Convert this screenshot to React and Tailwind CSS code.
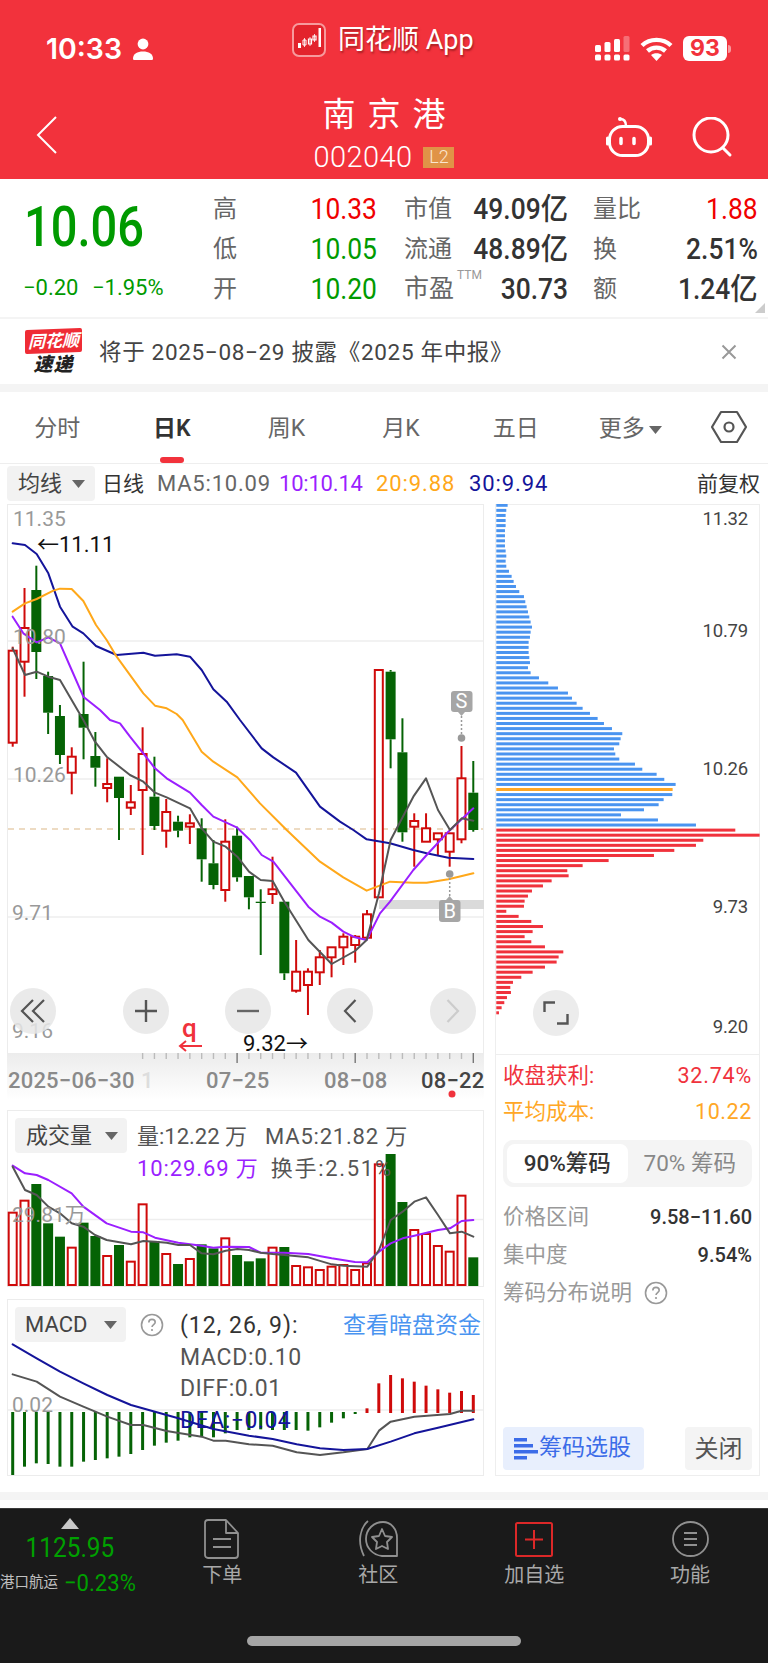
import React from "react";

const RED = "#cf0a0a";
const GREEN = "#056305";

// [top wick, body top, body bottom, bottom wick, isUp]
const candles = [
  [646.7, 650.7, 742.7, 746.7, 1],[588, 628, 661.7, 696.7, 1],[565.7, 590, 652, 679, 0],[671.7, 676, 712.7, 734, 0],
  [705, 716, 755, 764, 0],[747.3, 756.7, 772.7, 794.3, 1],[661.7, 714, 727.7, 759.3, 0],[732, 756, 767.7, 786.7, 0],
  [758.3, 784, 788, 802.3, 1],[776.7, 776.7, 798, 840, 0],[785, 802.3, 807.7, 815, 1],[727.3, 754, 790, 855, 1],
  [756.7, 796.7, 826, 830, 0],[799, 812, 830.7, 847.7, 1],[815.7, 821.7, 830.7, 837.3, 0],[814.3, 823.3, 826.7, 844, 1],
  [818.3, 828.3, 859.3, 881.7, 0],[840, 863.3, 885, 889.3, 0],[819.3, 841.7, 890, 901.7, 1],[826.7, 835.7, 877.3, 881.7, 0],
  [876, 876, 897.3, 909.3, 0],[889.3, 901.7, 903, 955, 0],[856.7, 889.3, 894, 904, 1],[901.7, 901.7, 973.3, 980, 0],
  [940, 971.7, 990.7, 992.7, 1],[968.3, 971.7, 985, 1015, 1],[950, 957.3, 972.3, 985, 1],[947.3, 947.3, 957.3, 977.3, 1],
  [933.3, 936.7, 947.3, 965, 1],[935, 936.7, 945, 962.7, 1],[910, 914.3, 937.7, 937.7, 1],[670, 670, 897.3, 897.3, 1],
  [670, 671.7, 739.3, 768.3, 0],[718.3, 752.3, 832.3, 841.7, 0],[813.3, 821, 826.7, 866.7, 1],[813.3, 828.3, 841.7, 841.7, 1],
  [833.3, 833.3, 839.3, 855, 1],[833.3, 833.3, 851.7, 866.7, 1],[746, 778.3, 839.3, 843.3, 1],[761, 792.7, 830, 831.7, 0],
];
const cx = (i) => 12.7 + 11.81 * i;

const z2 = (p) => p.map(([x, y]) => `${x / 3},${400 + y / 3}`).join(" ");
const z3 = (p) => p.map(([x, y]) => `${x / 3},${720 + y / 3}`).join(" ");
const z4 = (p) => p.map(([x, y]) => `${x / 3},${1100 + y / 3}`).join(" ");

const navy = z2([[38,430],[75,435],[110,462],[145,520],[180,620],[218,680],[250,700],[288,738],[350,765],[430,758],[465,767],[530,763],[570,770],[605,810],[640,868],[680,905],[720,960]]) + " " +
  z3([[785,85],[820,112],[888,158],[960,260],[1020,305],[1060,330],[1100,358],[1170,370],[1240,390],[1280,400],[1345,413],[1420,417]]);
const orange = z2([[38,635],[75,610],[110,597],[160,572],[180,566],[215,567],[250,603],[288,675],[320,720],[350,770],[430,880],[465,917],[500,925],[530,942],[548,960]]) + " " +
  z3([[605,95],[640,125],[712,172],[780,250],[860,330],[960,425],[1030,472],[1100,512],[1170,485],[1240,488],[1280,488],[1345,478],[1420,460]]);
const purple = z2([[38,650],[70,700],[110,727],[145,712],[180,730],[215,810],[250,890],[300,930],[330,960]]) + " " +
  z3([[360,10],[390,50],[430,100],[465,145],[500,175],[570,218],[605,255],[640,290],[710,322],[750,360],[785,405],[820,425],[855,470],[925,560],[960,590],[995,608],[1030,635],[1065,652],[1100,660],[1140,580],[1170,545],[1240,450],[1280,405],[1345,335],[1420,265]]);
const gray = z2([[38,745],[75,825],[110,815],[145,830],[180,840],[250,960]]) + " " +
  z3([[285,65],[320,110],[390,165],[430,185],[465,218],[500,232],[570,265],[605,325],[640,365],[677,380],[712,410],[747,455],[782,480],[818,483],[853,545],[925,660],[995,732],[1065,693],[1100,660],[1137,520],[1172,360],[1240,230],[1278,175],[1314,270],[1350,330],[1385,295],[1420,302]]);

const vols = [338,302,252,370,410,443,368,408,468,435,485,313,423,462,492,477,433,445,415,465,484,475,443,441,498,502,510,500,495,510,490,193,162,306,390,402,438,455,287,472];
const volGray = z4([[38,200],[75,270],[110,285],[145,320],[180,340],[215,370],[250,380],[285,405],[320,420],[393,433],[430,423],[465,425],[500,428],[535,435],[570,435],[605,460],[640,463],[677,452],[712,447],[747,450],[782,458],[818,462],[853,465],[925,472],[995,493],[1031,497],[1102,500],[1137,450],[1172,360],[1208,335],[1243,305],[1278,292],[1314,345],[1350,400],[1385,395],[1420,410]]);
const volPurple = z4([[38,197],[75,220],[110,225],[145,240],[215,280],[250,320],[320,370],[393,395],[430,397],[465,413],[535,428],[605,437],[640,443],[677,440],[747,441],[782,458],[853,458],[925,462],[995,475],[1065,486],[1102,487],[1137,455],[1172,430],[1208,415],[1243,407],[1314,390],[1350,385],[1385,363],[1420,360]]);

const macdBars = [1125,1100,1090,1092,1100,1100,1085,1080,1075,1070,1062,1050,1037,1028,1022,1012,1010,1012,1000,990,990,988,990,990,990,992,982,968,955,942,925,850,825,835,845,857,868,878,873,885];
const macdNavy = z4([[38,733],[110,775],[180,815],[250,850],[322,885],[393,915],[465,935],[535,955],[640,987],[747,1007],[818,1017],[890,1033],[960,1045],[1030,1050],[1102,1047],[1172,1025],[1243,1000],[1314,983],[1420,958]]);
const macdGray = z4([[38,823],[110,845],[180,890],[250,920],[322,950],[393,975],[430,975],[500,993],[605,1010],[640,1022],[677,1022],[747,1033],[818,1037],[890,1057],[960,1065],[1030,1057],[1102,1047],[1137,992],[1172,965],[1243,950],[1350,942],[1385,932],[1420,932]]);

const chips = [68,64,62,62,62,60,60,60,60,62,64,62,64,72,80,86,93,103,117,121,125,129,133,137,141,137,135,131,131,131,133,135,129,137,162,190,219,249,261,275,293,315,338,357,381,412,407,403,387,391,403,450,472,515,538,572,563,562,536,521,477,408,519,633,
  751,824,655,633,568,507,371,293,247,251,200,174,141,129,119,117,64,101,139,174,143,119,139,180,235,221,215,180,143,109,84,76,78,66,58,50,42];

const ChartLine = ({ points, color, w = 2 }) => (
  <polyline points={points} fill="none" stroke={color} strokeWidth={w} strokeLinejoin="round" strokeLinecap="round" />
);

const Caret = () => (
  <svg width="13" height="8" viewBox="0 0 13 8" className="shrink-0"><path d="M0 0H13L6.5 8Z" fill="#666" /></svg>
);

const SelectBtn = ({ label, className }) => (
  <div className={"flex items-center justify-between rounded-[4px] bg-[#f2f2f2] text-[22px] text-[#444] " + className}>
    <span>{label}</span>
    <Caret />
  </div>
);

const Help = ({ color = "#999" }) => (
  <svg width="24" height="24" viewBox="0 0 24 24">
    <circle cx="12" cy="12" r="10.5" fill="none" stroke={color} strokeWidth="1.6" />
    <path d="M8.8 9.4c0-1.9 1.4-3 3.2-3s3.2 1.1 3.2 2.8c0 2.4-3.2 2.4-3.2 4.9" fill="none" stroke={color} strokeWidth="1.6" />
    <circle cx="12" cy="17" r="1.1" fill={color} />
  </svg>
);

const Round = ({ left, top, children }) => <div className={"absolute flex h-[46px] w-[46px] items-center justify-center rounded-full bg-[#e6e6e6]/85 " + left + " " + top}>{children}</div>;

function StatusBar() {
  return (
    <div className="flex h-[80px] items-start">
      <div className="flex w-[292px] items-center pl-[46px] pt-[31px] text-white">
        <span className="text-[29px] font-semibold leading-9 font-['Inter',sans-serif] scale-x-[0.98] origin-left inline-block">10:33</span>
        <svg width="20" height="22" viewBox="0 0 20 22" className="ml-[9px]" fill="#fff">
          <circle cx="10" cy="6" r="5.4" />
          <path d="M0 20.5c0-4.5 4.4-7 10-7s10 2.5 10 7c0 1-.6 1.5-1.5 1.5h-17C.6 22 0 21.500 0 20.500Z" />
        </svg>
      </div>
      <div className="flex w-[303px] items-start pt-[23px]">
        <svg width="34" height="34" viewBox="0 0 34 34">
          <rect x="1" y="1" width="32" height="32" rx="6" fill="#e3232c" stroke="#f79a9d" strokeWidth="2" />
          <path d="M6 20h3v5H6z" fill="#fff" />
          <path d="M11 17h3v5h-3z" fill="none" stroke="#fff" strokeWidth="1" />
          <path d="M16.500 16h3v5h-3zM21 13h3v4h-3z" fill="none" stroke="#fff" strokeWidth="1.2" />
          <path d="M26.500 5h2.500v19h-2.500z" fill="#fff" />
          <path d="M12.500 15v9M18 14v9M22.500 11v8" stroke="#fff" strokeWidth=".8" />
        </svg>
        <span className="ml-[12px] text-[27px] leading-[34px] text-white [text-shadow:1px_2px_2px_rgba(120,20,20,0.6)]">同花顺 App</span>
      </div>
      <div className="flex items-center pt-[36px]">
        <svg width="35" height="25" viewBox="0 0 35 25" fill="#fff">
          <rect x="0" y="9" width="6" height="7" rx="1.500" /><rect x="9.500" y="6" width="6" height="10" rx="1.500" /><rect x="19" y="3" width="6" height="13" rx="1.500" /><rect x="28.500" y="0" width="6" height="16" rx="1.500" opacity=".3" />
          <rect x="0" y="18.500" width="6" height="6" rx="1.500" /><rect x="9.500" y="18.500" width="6" height="6" rx="1.500" /><rect x="19" y="18.500" width="6" height="6" rx="1.500" /><rect x="28.500" y="18.500" width="6" height="6" rx="1.500" />
        </svg>
        <svg width="33" height="24" viewBox="0 0 33 24" className="ml-[10px]" fill="none" stroke="#fff" strokeWidth="4.400">
          <path d="M2 8.500C10 1 23 1 31 8.500" /><path d="M7.500 14c5-4.500 13-4.500 18 0" />
          <path d="M16.500 24l-5.500-6c3-2.500 8-2.500 11 0Z" fill="#fff" stroke="none" />
        </svg>
        <div className="ml-[10px] flex h-[25px] w-[44px] items-center justify-center rounded-[6px] bg-white text-[23px] font-bold leading-none text-[#f2323c] font-['Inter',sans-serif]">93</div>
        <div className="ml-[1px] h-[8px] w-[3px] rounded-r-full bg-white/50" />
      </div>
    </div>
  );
}

function NavBar() {
  return (
    <div className="flex h-[99px]">
      <div className="w-[300px] pl-[36px] pt-[36px]">
        <svg width="22" height="38" viewBox="0 0 22 38" fill="none" stroke="#fff" strokeWidth="2"><path d="M20 1 2 19l18 18" /></svg>
      </div>
      <div className="flex w-[168px] flex-col items-center pt-[15px] text-white">
        <div className="h-[40px] pl-[12px] text-[33px] font-normal leading-[40px] tracking-[12px]">南京港</div>
        <div className="mt-[7px] flex h-[30px] items-center">
          <span className="text-[29px] font-light leading-[30px] tracking-[0.4px]">002040</span>
          <span className="ml-[11px] flex h-[21px] w-[31px] items-center justify-center bg-[#e09347] text-[18px] font-light leading-none text-[#fbe6d0]">L2</span>
        </div>
      </div>
      <div className="flex w-[300px] items-start pl-[138px] pt-[37px]">
        <svg width="46" height="40" viewBox="0 0 46 40" fill="none" stroke="#fff" strokeWidth="3">
          <circle cx="14" cy="2" r="2" fill="#fff" stroke="none" />
          <path d="M14 2c4 0 6 3 6 7" strokeLinecap="round" strokeWidth="2.500" />
          <rect x="3.500" y="9.500" width="39" height="29" rx="13" />
          <path d="M1.500 21v6M44.500 21v6" strokeLinecap="round" />
          <path d="M15 21.500v5M28 21.500v5" strokeWidth="3.500" strokeLinecap="round" />
        </svg>
        <svg width="42" height="42" viewBox="0 0 42 42" fill="none" stroke="#fff" strokeWidth="3" className="ml-[40px]">
          <circle cx="19" cy="18" r="17" /><path d="M31 31l7 7" strokeLinecap="round" />
        </svg>
      </div>
    </div>
  );
}

const Lbl = ({ children, className = "text-[24px]" }) => <span className={"leading-10 text-[#666] " + className}>{children}</span>;
const Val = ({ children, color }) => (
  <span className={"inline-block origin-right scale-x-[0.91] whitespace-nowrap text-[29px] leading-10 " + color}>{children}</span>
);
const Yi = ({ n }) => <>{n}<span className="text-[30px]">亿</span></>;

function QuoteCol({ rows, className }) {
  return (
    <div className={"flex flex-col " + className}>
      {rows.map((r, i) => (
        <div key={i} className="flex h-10 items-center justify-between">
          {r[0]}
          <Val color={r[2]}>{r[1]}</Val>
        </div>
      ))}
    </div>
  );
}

function Quote() {
  return (
    <div className="relative flex h-[138px] pt-[10px]">
      <div className="flex w-[213px] flex-col pl-[24px] text-[#009a00]">
        <div className="h-[79px] origin-left scale-x-[0.84] text-[56px] font-medium leading-[76px]">10.06</div>
        <div className="flex h-[40px] items-center text-[22px] leading-10">
          <span className="ml-[-1px] inline-block w-[69px]">−0.20</span>
          <span className="inline-block">−1.95%</span>
        </div>
      </div>
      <QuoteCol className="w-[164px]" rows={[[<Lbl>高</Lbl>, "10.33", "text-[#f00000]"], [<Lbl>低</Lbl>, "10.05", "text-[#009a00]"], [<Lbl>开</Lbl>, "10.20", "text-[#009a00]"]]} />
      <QuoteCol className="ml-[27px] w-[164px]" rows={[
        [<Lbl>市值</Lbl>, <Yi n="49.09" />, "font-medium text-[#333]"],
        [<Lbl>流通</Lbl>, <Yi n="48.89" />, "font-medium text-[#333]"],
        [<span className="flex items-start"><Lbl className="text-[25px]">市盈</Lbl><span className="ml-[3px] mt-[-1px] text-[12px] leading-[14px] text-[#999]">TTM</span></span>, "30.73", "font-medium text-[#333]"],
      ]} />
      <QuoteCol className="ml-[25px] w-[165px]" rows={[[<Lbl>量比</Lbl>, "1.88", "text-[#f00000]"], [<Lbl>换</Lbl>, "2.51%", "font-medium text-[#333]"], [<Lbl>额</Lbl>, <Yi n="1.24" />, "font-medium text-[#333]"]]} />
      <svg width="10" height="10" viewBox="0 0 10 10" className="absolute bottom-[4px] right-[3px]"><path d="M10 0V10H0Z" fill="#ccc" /></svg>
    </div>
  );
}

function Alert() {
  return (
    <div className="flex h-[65px] items-center">
      <div className="ml-[25px] flex h-[46px] w-[57px] flex-col items-center">
        <div className="flex h-[24px] w-[57px] -skew-y-2 items-center justify-center rounded-[2px] bg-[#ef2c35] text-[17px] font-bold italic leading-none text-white">同花顺</div>
        <div className="mt-[1px] text-[19px] font-black italic leading-[21px] tracking-[1px] text-[#222]">速递</div>
      </div>
      <div className="ml-[17px] whitespace-nowrap text-[22.5px] leading-[30px] tracking-[0.67px] text-[#444]">将于 2025−08−29 披露《2025 年中报》</div>
      <svg width="16" height="16" viewBox="0 0 16 16" className="ml-auto mr-[31px]" fill="none" stroke="#999" strokeWidth="2"><path d="M1.500 1.500l13 13M14.500 1.500l-13 13" /></svg>
    </div>
  );
}

function Tabs() {
  const items = ["分时", "日K", "周K", "月K", "五日"];
  return (
    <div className="flex h-[72px] border-b border-[#eeeeee]">
      {items.map((t, i) => (
        <div key={t} className="flex w-[114.6px] flex-col items-center pt-[22px]">
          <span className={"text-[23px] leading-[30px] " + (i === 1 ? "font-semibold text-[#333]" : "text-[#666]")}>{t}</span>
          <div className={"mt-[13px] h-[6px] w-[24px] rounded-full " + (i === 1 ? "bg-[#f2323c]" : "")} />
        </div>
      ))}
      <div className="flex w-[114.6px] items-start justify-center pt-[22px]">
        <span className="text-[23px] leading-[30px] text-[#666]">更多</span>
        <svg width="13" height="8" viewBox="0 0 13 8" className="ml-[4px] mt-[12px]"><path d="M0 0H13L6.500 8Z" fill="#666" /></svg>
      </div>
      <div className="ml-[23px] pt-[17px]">
        <svg width="36" height="36" viewBox="0 0 36 36" fill="none" stroke="#555" strokeWidth="2.200" strokeLinejoin="round">
          <path d="M10 3h16l9 15-9 15H10L1 18Z" /><circle cx="18" cy="18" r="4.500" />
        </svg>
      </div>
    </div>
  );
}

function MaRow() {
  return (
    <div className="flex h-[40px] items-start pt-[2px] text-[22px] leading-[36px]">
      <SelectBtn label="均线" className="ml-[7px] h-[35px] w-[88px] pl-[11px] pr-[10px]" />
      <span className="ml-[7px] w-[55px] text-[21px] text-[#333]">日线</span>
      <span className="w-[122px] text-[#666] tracking-[0.8px]">MA5:10.09</span>
      <span className="w-[97px] text-[#9b1fff] tracking-[-0.2px]">10:10.14</span>
      <span className="w-[93px] text-[#ffa81a] tracking-[0.9px]">20:9.88</span>
      <span className="w-[228px] text-[#14149a] tracking-[0.9px]">30:9.94</span>
      <span className="text-[21px] text-[#333]">前复权</span>
    </div>
  );
}

function MainChart() {
  const T = ({ x, y, children, fill = "#999", s = 21 }) => <text x={x} y={y} fontSize={s} fill={fill}>{children}</text>;
  return (
    <div className="relative h-[549px] w-[477px] border border-[#ececec] border-b-0">
      <svg width="477" height="549" viewBox="7 504 477 549" className="absolute left-[-1px] top-[-1px] overflow-visible">
        {[641, 779, 917].map((y) => <line key={y} x1="8" x2="483" y1={y} y2={y} stroke="#eeeeee" strokeWidth="1.500" />)}
        <line x1="8" x2="483" y1="829" y2="829" stroke="#e8d0b0" strokeWidth="1.500" strokeDasharray="6 5" />
        <rect x="379" y="900" width="105" height="9" fill="#dadada" />
        {candles.map((c, i) => {
          const x = cx(i);
          const col = c[4] ? RED : GREEN;
          return (
            <g key={i}>
              <line x1={x} x2={x} y1={c[0]} y2={c[1]} stroke={col} strokeWidth="2" />
              <line x1={x} x2={x} y1={c[2]} y2={c[3]} stroke={col} strokeWidth="2" />
              {c[4]
                ? <rect x={x - 4} y={c[1]} width="8" height={c[2] - c[1]} fill="#fff" stroke={col} strokeWidth="2" />
                : <rect x={x - 5} y={c[1]} width="10" height={c[2] - c[1]} fill={col} />}
            </g>
          );
        })}
        <ChartLine points={navy} color="#14149a" />
        <ChartLine points={orange} color="#ffa81a" />
        <ChartLine points={purple} color="#9b1fff" />
        <ChartLine points={gray} color="#555555" />
        <T x="13" y="526">11.35</T>
        <T x="37" y="552" fill="#111" s={22}>←11.11</T>
        <T x="13" y="644">10.80</T>
        <T x="13" y="782">10.26</T>
        <T x="12" y="920">9.71</T>
        <T x="12" y="1038">9.16</T>
        <T x="243" y="1051" fill="#111" s={22}>9.32→</T>
        <text x="182" y="1037" fontSize="26" fontWeight="500" fill="#f0323c">q</text>
        <path d="M202 1046H180M186 1041l-6 5 6 5" fill="none" stroke="#f0323c" strokeWidth="2" />
        <rect x="451" y="691" width="21.500" height="21" rx="3" fill="#a6a6a6" />
        <path d="M458 712h7l-3.500 4Z" fill="#a6a6a6" />
        <text x="461.500" y="708" fontSize="20" fill="#fff" textAnchor="middle">S</text>
        <line x1="461.500" x2="461.500" y1="716" y2="734" stroke="#999" strokeWidth="1.500" strokeDasharray="2 2" />
        <circle cx="461.500" cy="738" r="3.800" fill="#999" />
        <circle cx="449.700" cy="874" r="3.800" fill="#999" />
        <line x1="449.700" x2="449.700" y1="878" y2="897" stroke="#999" strokeWidth="1.500" strokeDasharray="2 2" />
        <path d="M446 900h7l-3.500-4Z" fill="#a6a6a6" />
        <rect x="439" y="900" width="21.500" height="22" rx="3" fill="#a6a6a6" />
        <text x="449.700" y="918" fontSize="20" fill="#fff" textAnchor="middle">B</text>
      </svg>
      <Round left="left-[2px]" top="top-[483px]">
        <svg width="26" height="24" viewBox="0 0 26 24" fill="none" stroke="#555" strokeWidth="2.200"><path d="M13 1 2 12l11 11M24 1 13 12l11 11" /></svg>
      </Round>
      <Round left="left-[115px]" top="top-[483px]">
        <svg width="24" height="24" viewBox="0 0 24 24" fill="none" stroke="#555" strokeWidth="2.400"><path d="M12 1v22M1 12h22" /></svg>
      </Round>
      <Round left="left-[217px]" top="top-[483px]">
        <svg width="24" height="4" viewBox="0 0 24 4" fill="none" stroke="#666" strokeWidth="2.400"><path d="M1 2h22" /></svg>
      </Round>
      <Round left="left-[319px]" top="top-[483px]">
        <svg width="14" height="24" viewBox="0 0 14 24" fill="none" stroke="#555" strokeWidth="2.200"><path d="M12.500 1 2 12l10.500 11" /></svg>
      </Round>
      <Round left="left-[422px]" top="top-[483px]">
        <svg width="14" height="24" viewBox="0 0 14 24" fill="none" stroke="#ccc" strokeWidth="2.200"><path d="M1.500 1 12 12 1.500 23" /></svg>
      </Round>
    </div>
  );
}

function TimeAxis() {
  const ticks = Array.from({ length: 29 }, (_, i) => 473.3 - 11.81 * i);
  const T = ({ x, children, fill = "#8a8a8a" }) => <text x={x} y="1088" fontSize="22" fontWeight="500" letterSpacing="0.2" fill={fill}>{children}</text>;
  return (
    <div className="h-[47px] w-[477px] bg-gradient-to-b from-[#ececec] to-[#ffffff]">
      <svg width="477" height="47" viewBox="7 1053 477 47" className="block">
        {ticks.map((x, i) => {
          const long = i === 0 || i === 10 || i === 20;
          return <line key={i} x1={x} x2={x} y1="1053" y2={long ? 1063 : 1059} stroke={long ? "#777" : "#bbb"} strokeWidth="1.400" />;
        })}
        <T x="8">2025−06−30</T>
        <T x="141" fill="#dddddd">1</T>
        <T x="206">07−25</T>
        <T x="324">08−08</T>
        <T x="421" fill="#444">08−22</T>
        <circle cx="452" cy="1094" r="3.500" fill="#f0323c" />
      </svg>
    </div>
  );
}

function Volume() {
  return (
    <div className="relative h-[177px] w-[477px] border border-[#ececec]">
      <svg width="477" height="177" viewBox="7 1110 477 177" className="absolute left-[-1px] top-[-1px]">
        <line x1="8" x2="483" y1="1219.500" y2="1219.500" stroke="#eeeeee" strokeWidth="1.500" />
        {vols.map((v, i) => {
          const x = cx(i);
          const top = 1100 + v / 3;
          return candles[i][4]
            ? <rect key={i} x={x - 4} y={top} width="8" height={1285 - top} fill="#fff" stroke={RED} strokeWidth="2" />
            : <rect key={i} x={x - 5} y={top} width="10" height={1286 - top} fill={GREEN} />;
        })}
        <ChartLine points={volPurple} color="#9b1fff" />
        <ChartLine points={volGray} color="#555555" />
        <text x="12" y="1222" fontSize="21" fill="#999">29.81万</text>
      </svg>
      <div className="relative flex flex-col pl-[7px] pt-[7px]">
        <div className="flex items-start">
          <SelectBtn label="成交量" className="h-[35px] w-[112px] pl-[11px] pr-[9px]" />
          <div className="ml-[10px] whitespace-nowrap text-[22px] leading-[38px] text-[#555]">量:12.22 万<span className="ml-[18px] tracking-[0.8px]">MA5:21.82 万</span></div>
        </div>
        <div className="-mt-[5px] ml-[122px] whitespace-nowrap text-[22px] leading-[36px] tracking-[0.9px] text-[#9b1fff]">10:29.69 万<span className="ml-[12px] tracking-[1.7px] text-[#555]">换手:2.51%</span></div>
      </div>
    </div>
  );
}

function Macd() {
  return (
    <div className="relative h-[177px] w-[477px] border border-[#ececec]">
      <svg width="477" height="177" viewBox="7 1299 477 177" className="absolute left-[-1px] top-[-1px]">
        <line x1="8" x2="483" y1="1410" y2="1410" stroke="#eeeeee" strokeWidth="1.500" />
        {macdBars.map((b, i) => {
          const x = cx(i);
          const end = 1100 + b / 3;
          return i < 30
            ? <line key={i} x1={x} x2={x} y1="1412" y2={end} stroke={GREEN} strokeWidth="3" />
            : <line key={i} x1={x} x2={x} y1="1413" y2={end} stroke={RED} strokeWidth="3" />;
        })}
        <ChartLine points={macdGray} color="#555555" />
        <ChartLine points={macdNavy} color="#14149a" />
        <text x="12" y="1412" fontSize="21" fill="#999">0.02</text>
      </svg>
      <div className="relative flex pl-[7px] pt-[7px]">
        <SelectBtn label="MACD" className="h-[35px] w-[111px] pl-[10px] pr-[9px]" />
        <div className="ml-[14px] mt-[6px]"><Help /></div>
        <div className="ml-[16px] flex w-[163px] flex-col whitespace-nowrap text-[23px] leading-[31.500px] text-[#555]">
          <span className="mt-[3px] tracking-[1px] text-[#333]">(12, 26, 9):</span>
          <span className="tracking-[0.7px]">MACD:0.10</span>
          <span className="tracking-[0.5px]">DIFF:0.01</span>
          <span className="tracking-[0.5px] text-[#14149a]">DEA:−0.04</span>
        </div>
        <div className="mt-[3px] whitespace-nowrap text-[23px] leading-[31px] text-[#4a94f0]">查看暗盘资金</div>
      </div>
    </div>
  );
}

function Chips() {
  const T = ({ y, children }) => <text x="253" y={y} textAnchor="end" fontSize="18.500" letterSpacing="-0.2" fill="#444">{children}</text>;
  return (
    <div className="relative h-[550px] w-[265px] border-x border-t border-[#eeeeee]">
      <svg width="265" height="550" viewBox="495 503 265 550" className="absolute left-[-1px] top-[-1px]">
        {chips.map((z, i) => (
          <rect key={i} x="496.300" y={504.300 + 5.075 * i - 1.500} width={(z - 34) / 3} height="3" fill={i === 56 ? "#ffa726" : i < 64 ? "#4a94f0" : "#f0323c"} />
        ))}
        <g transform="translate(495 0)">
          <T y="524">11.32</T>
          <T y="635.500">10.79</T>
          <T y="774">10.26</T>
          <T y="911.500">9.73</T>
          <T y="1032">9.20</T>
        </g>
      </svg>
      <div className="absolute left-[37px] top-[485px] flex h-[46px] w-[46px] items-center justify-center rounded-full bg-[#ececec]">
        <svg width="26" height="24" viewBox="0 0 26 24" fill="none" stroke="#555" strokeWidth="2.400"><path d="M1.500 11V1.500H12M24.500 13v9.500H14" /></svg>
      </div>
    </div>
  );
}

function ChipInfo() {
  const Row = ({ l, r }) => (
    <div className="flex h-[38px] items-center justify-between">
      <span className="text-[21.500px] text-[#999]">{l}</span>
      <span className="text-[20px] font-medium text-[#333]">{r}</span>
    </div>
  );
  return (
    <div className="h-[422px] w-[265px] border border-[#eeeeee] px-[7px]">
      <div className="flex h-[38px] items-center justify-between pt-[4px] text-[21.500px] text-[#f0323c]"><span>收盘获利:</span><span className="tracking-[0.8px]">32.74%</span></div>
      <div className="flex h-[38px] items-center justify-between pt-[1px] text-[21.500px] text-[#ffa726]"><span>平均成本:</span><span className="tracking-[0.6px]">10.22</span></div>
      <div className="mt-[9px] flex h-[47px] items-center rounded-[10px] bg-[#f4f4f4] pl-[4px]">
        <div className="flex h-[39px] w-[121px] items-center justify-center rounded-[8px] bg-white text-[22.500px] font-medium text-[#333]">90%筹码</div>
        <div className="flex w-[125px] justify-center text-[22.500px] text-[#888]">70% 筹码</div>
      </div>
      <div className="mt-[11px] flex flex-col">
        <Row l="价格区间" r="9.58−11.60" />
        <Row l="集中度" r="9.54%" />
        <div className="flex h-[38px] items-center text-[21.500px] text-[#999]">筹码分布说明<span className="ml-[12px] flex"><Help /></span></div>
      </div>
      <div className="mt-[115px] flex justify-between">
        <div className="flex h-[43px] w-[141px] items-center rounded-[4px] bg-[#e8effd] pl-[11px] text-[23px] text-[#3c6ce8]">
          <svg width="24" height="22" viewBox="0 0 24 22" fill="#3c6ce8"><rect y="0" width="13" height="3.500" /><rect y="6" width="19" height="3.500" /><rect y="12" width="24" height="3.500" /><rect y="18" width="13" height="3.500" /></svg>
          <span className="ml-[1px]">筹码选股</span>
        </div>
        <div className="flex h-[43px] w-[67px] items-center justify-center rounded-[4px] bg-[#f4f4f4] text-[24px] text-[#555]">关闭</div>
      </div>
    </div>
  );
}

function BottomNav() {
  const Item = ({ icon, label }) => (
    <div className="flex w-[156px] flex-col items-center pt-[10px]">
      <div className="flex h-[40px] items-center justify-center">{icon}</div>
      <span className="mt-[4px] text-[20px] leading-[24px] text-[#a8a8a8]">{label}</span>
    </div>
  );
  return (
    <div className="flex h-[155px] flex-col border-t border-[#3a3a3a] bg-[#1a1a1a]">
      <div className="flex h-[127px]">
        <div className="flex w-[144.500px] flex-col items-center">
          <svg width="18" height="11" viewBox="0 0 18 11" className="mr-[4px] mt-[9px]"><path d="M0 11 9 0l9 11Z" fill="#c8c8c8" /></svg>
          <span className="mr-[4px] mt-[2px] inline-block origin-center scale-x-[0.87] text-[28px] leading-[34px] text-[#00a000]">1125.95</span>
          <div className="mt-[3px] flex w-full items-center whitespace-nowrap">
            <span className="w-[60px] text-[14.500px] leading-[22px] text-[#c0c0c0]">港口航运</span>
            <span className="ml-[4px] inline-block origin-left scale-x-[0.92] text-[24px] leading-[30px] text-[#00a000]">−0.23%</span>
          </div>
        </div>
        <Item label="下单" icon={
          <svg width="36" height="40" viewBox="0 0 36 40" fill="none" stroke="#909090" strokeWidth="1.800" strokeLinejoin="round">
            <path d="M4 1h18l12 13v22a3 3 0 0 1-3 3H4a3 3 0 0 1-3-3V4a3 3 0 0 1 3-3Z" /><path d="M22 1v13h12" /><path d="M9 20h18M9 28h18" />
          </svg>} />
        <Item label="社区" icon={
          <svg width="42" height="38" viewBox="0 0 42 38" fill="none" stroke="#909090" strokeWidth="1.800" strokeLinejoin="round">
            <path d="M11 1C3 8 0 22 7 36" /><path d="M26 2c8 0 14 7 14 16v18H25C16 35 9 28 9 19 9 9 17 2 26 2Z" />
            <path d="M25 9l3 7 7 1-5 5 1 7-6-3-6 3 1-7-5-5 7-1Z" />
          </svg>} />
        <Item label="加自选" icon={
          <svg width="38" height="35" viewBox="0 0 38 35" fill="none" stroke="#dc2828" strokeWidth="2">
            <rect x="1" y="1" width="36" height="33" rx="1.500" /><path d="M10 17.500h18M19 8v19" />
          </svg>} />
        <Item label="功能" icon={
          <svg width="37" height="36" viewBox="0 0 37 36" fill="none" stroke="#909090" strokeWidth="1.800">
            <ellipse cx="18.500" cy="18" rx="17.500" ry="17" /><path d="M12 12h13M12 18h13M12 24h13" strokeWidth="2.200" />
          </svg>} />
      </div>
      <div className="mx-auto h-[10px] w-[274px] rounded-full bg-[#a5a5a5]" />
    </div>
  );
}

export default function App() {
  return (
    <div className="flex h-[1663px] w-[768px] flex-col overflow-hidden bg-white font-['Roboto','Noto_Sans_CJK_SC',sans-serif]">
      <div className="h-[179px] bg-[#f2323c]">
        <StatusBar />
        <NavBar />
      </div>
      <Quote />
      <div className="h-[2px] bg-[#f4f4f4]" />
      <Alert />
      <div className="h-[8px] bg-[#f4f4f4]" />
      <Tabs />
      <MaRow />
      <div className="flex">
        <div className="ml-[7px] flex w-[477px] flex-col">
          <MainChart />
          <TimeAxis />
          <div className="mt-[10px]"><Volume /></div>
          <div className="mt-[12px]"><Macd /></div>
        </div>
        <div className="ml-[11px] flex flex-col">
          <Chips />
          <ChipInfo />
        </div>
      </div>
      <div className="mt-[16px] h-[8px] bg-[#f4f4f4]" />
      <div className="h-[8px]" />
      <BottomNav />
    </div>
  );
}
